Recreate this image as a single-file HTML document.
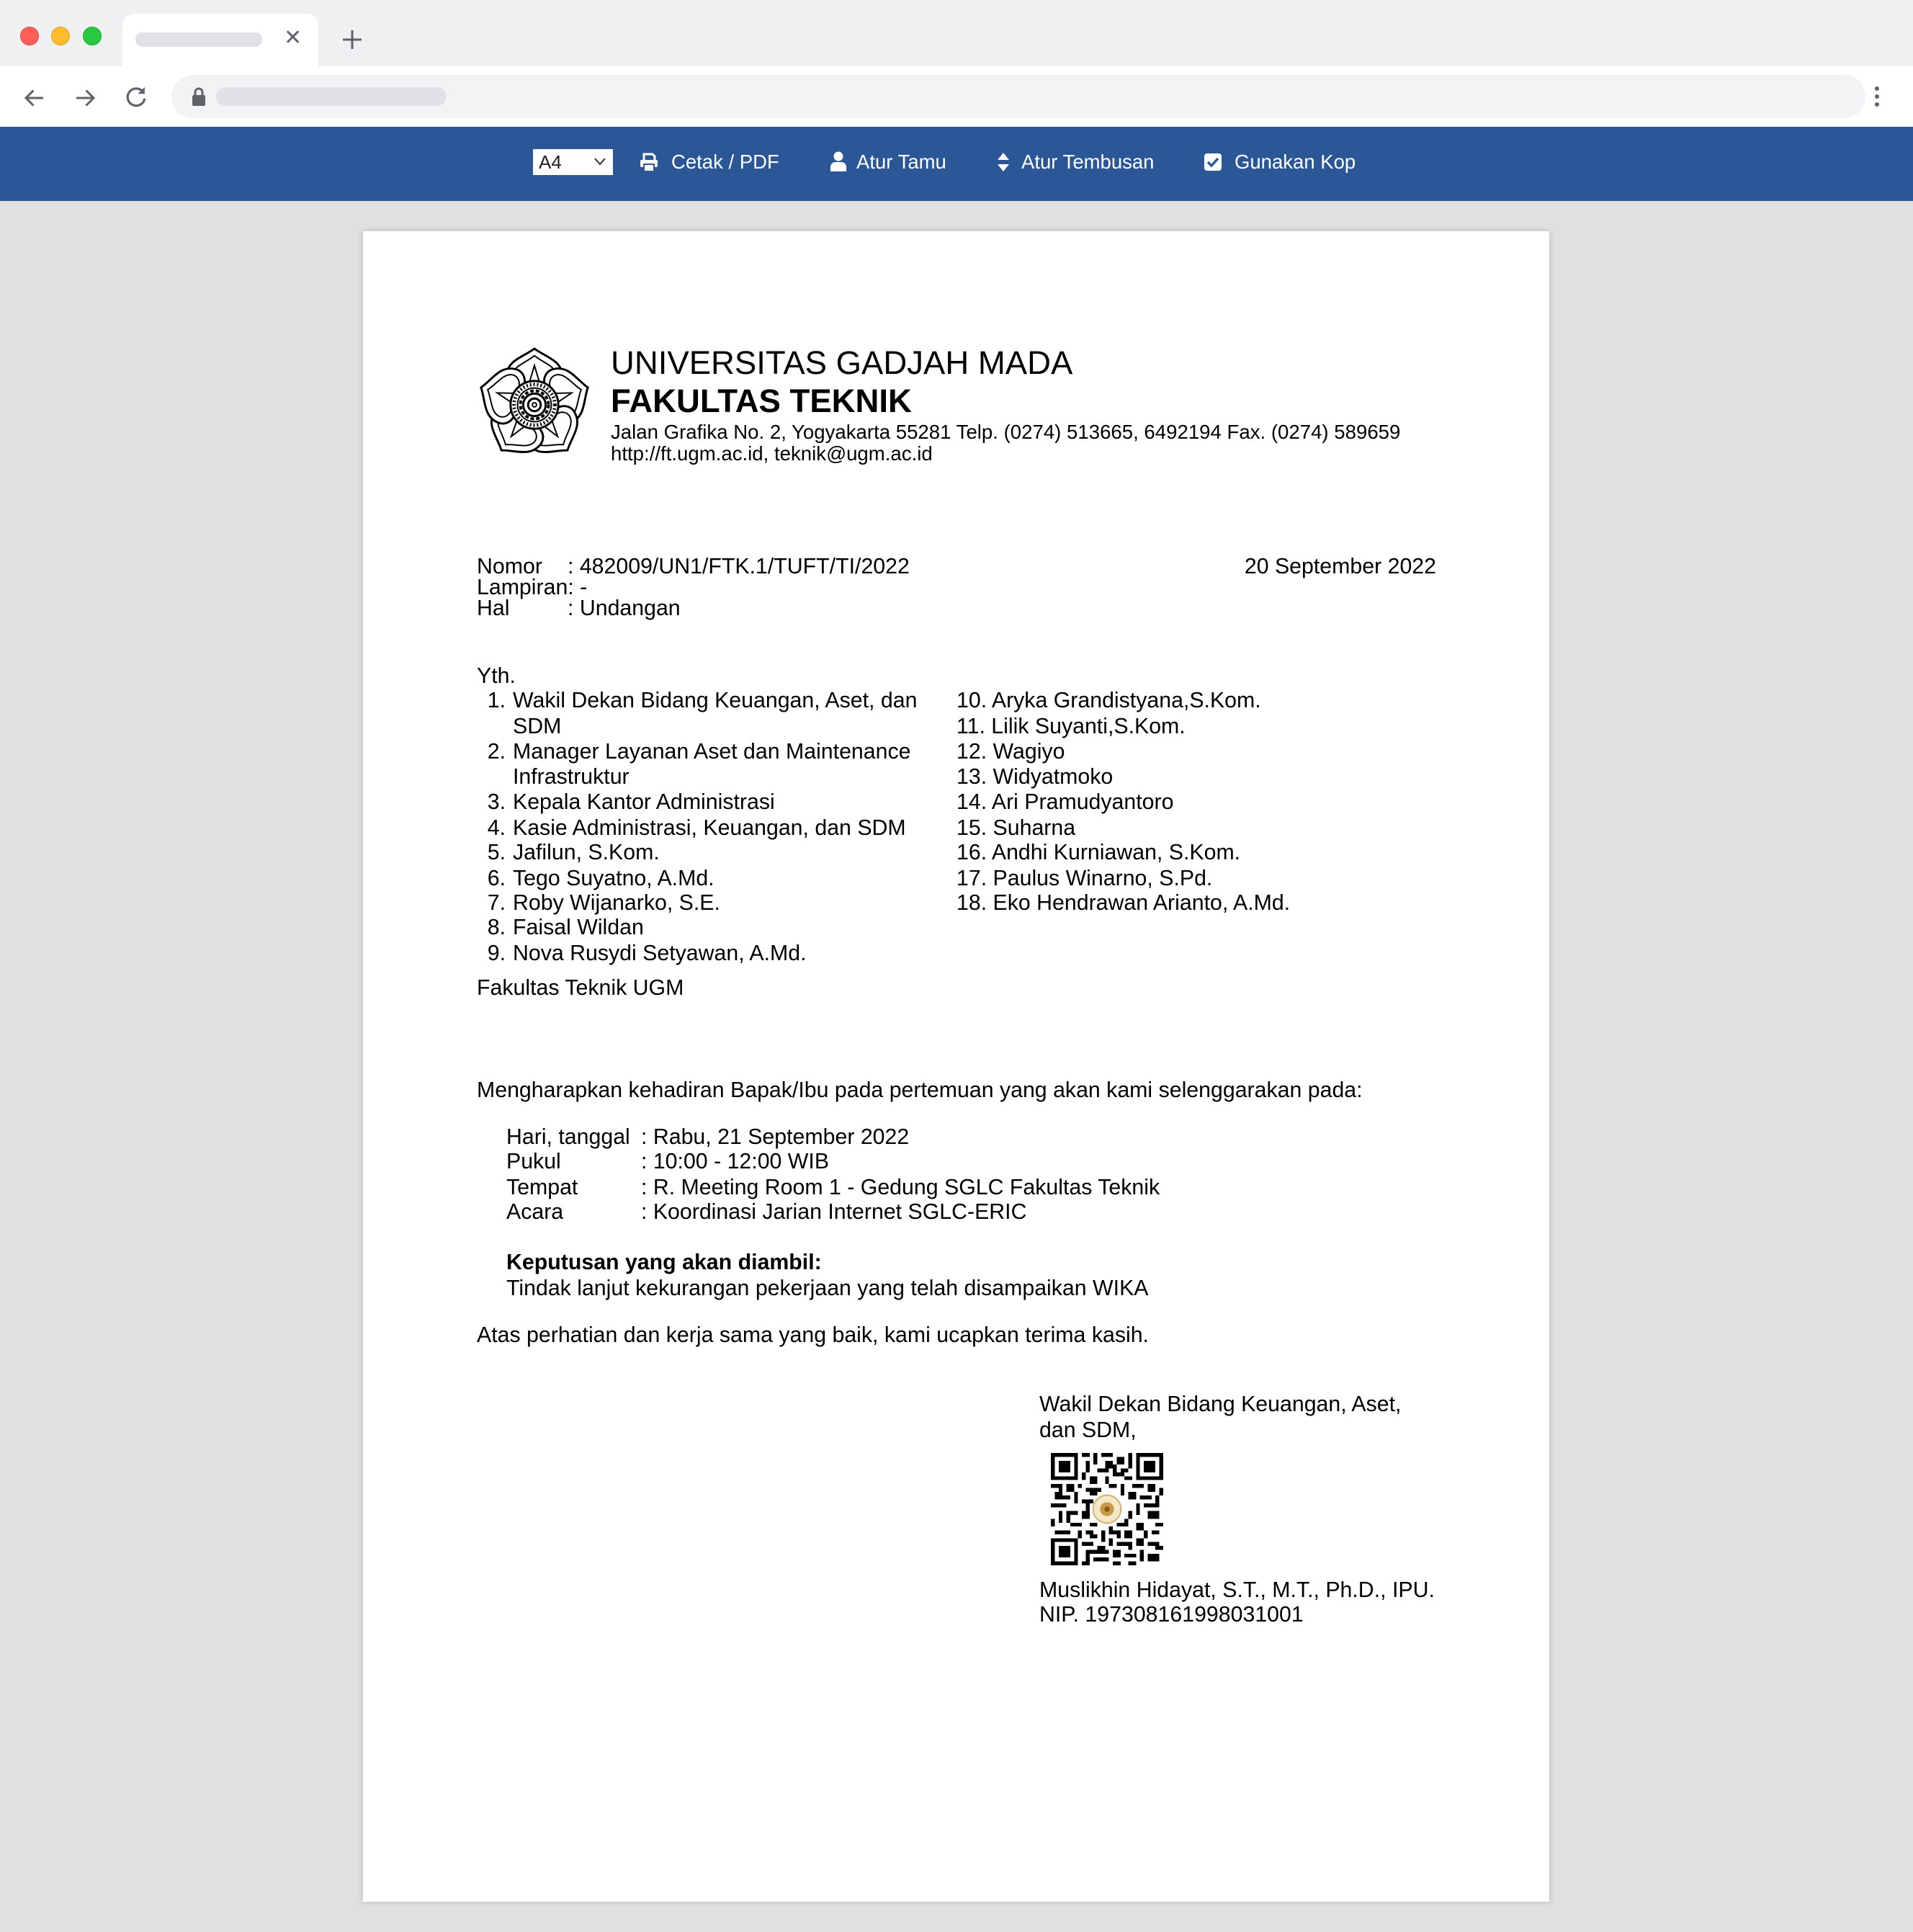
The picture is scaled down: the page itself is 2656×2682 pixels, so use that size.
<!DOCTYPE html>
<html><head><meta charset="utf-8"><style>
*{margin:0;padding:0;box-sizing:border-box}
body{width:2656px;height:2682px;background:#e0e0e0;position:relative;overflow:hidden;font-family:"Liberation Sans",Arial,sans-serif;color:#000}
.a{position:absolute;white-space:nowrap}
.t{font-size:30.3px;line-height:34px;margin-top:2px}
.tb{color:#fff;font-size:27.5px;line-height:34px}
</style></head><body>
<div class="a" style="left:0;top:0;width:2656px;height:92px;background:#eff0f2"></div>
<div class="a" style="left:28px;top:37px;width:26px;height:26px;border-radius:50%;background:#fe5f57;border:1px solid #e0443e"></div>
<div class="a" style="left:71px;top:37px;width:26px;height:26px;border-radius:50%;background:#febc2e;border:1px solid #dea123"></div>
<div class="a" style="left:115px;top:37px;width:26px;height:26px;border-radius:50%;background:#28c840;border:1px solid #1aab29"></div>
<div class="a" style="left:170px;top:19px;width:272px;height:74px;background:#fff;border-radius:16px 16px 0 0"></div>
<div class="a" style="left:188px;top:45px;width:176px;height:20px;border-radius:10px;background:#dfe1e5"></div>
<div class="a" style="left:394px;top:36px;font-size:30px;line-height:34px;color:#5f6368">✕</div>
<svg class="a" style="left:474px;top:40px" width="30" height="30"><path d="M15 2V28M2 15H28" stroke="#5f6368" stroke-width="3"/></svg>
<div class="a" style="left:0;top:92px;width:2656px;height:84px;background:#fff"></div>
<svg class="a" style="left:30px;top:118px" width="36" height="36" viewBox="0 0 24 24"><path d="M20 12H5M11 5l-7 7 7 7" stroke="#5f6368" stroke-width="2" fill="none"/></svg>
<svg class="a" style="left:100px;top:118px" width="36" height="36" viewBox="0 0 24 24"><path d="M4 12h15M13 5l7 7-7 7" stroke="#5f6368" stroke-width="2" fill="none"/></svg>
<svg class="a" style="left:170px;top:116px" width="38" height="38" viewBox="0 0 24 24"><path d="M18.5 8A7.5 7.5 0 1 0 19.5 13" stroke="#5f6368" stroke-width="2" fill="none"/><path d="M19.5 3v6h-6z" fill="#5f6368"/></svg>
<div class="a" style="left:238px;top:104px;width:2352px;height:60px;border-radius:30px;background:#f1f3f4"></div>
<svg class="a" style="left:266px;top:120px" width="20" height="28" viewBox="0 0 20 28"><path d="M5 12V8a5 5 0 0 1 10 0v4" stroke="#5f6368" stroke-width="3" fill="none"/><rect x="1" y="12" width="18" height="15" rx="2" fill="#5f6368"/></svg>
<div class="a" style="left:300px;top:121px;width:320px;height:26px;border-radius:13px;background:#e0e2e5"></div>
<div class="a" style="left:2603px;top:120px;width:6px;height:6px;border-radius:50%;background:#5f6368;box-shadow:0 11px 0 #5f6368,0 22px 0 #5f6368"></div>
<div class="a" style="left:0;top:176px;width:2656px;height:103px;background:#2b5797"></div>
<div class="a" style="left:740px;top:207px;width:111px;height:36px;background:#fff;font-size:26px;line-height:36px;padding-left:8px;color:#222">A4</div>
<svg class="a" style="left:824px;top:217px" width="18" height="14" viewBox="0 0 18 14"><path d="M2 3l7 8 7-8" stroke="#333" stroke-width="2" fill="none"/></svg>
<svg class="a" style="left:887px;top:211px" width="28" height="28" viewBox="0 0 28 28"><path d="M7 11V3h12l3 3v5" stroke="#fff" stroke-width="3" fill="none"/><rect x="2" y="11" width="24" height="10" rx="2" fill="#fff"/><rect x="7" y="17" width="14" height="10" fill="#fff" stroke="#2b5797" stroke-width="2"/></svg>
<div class="a tb" style="left:932px;top:208px">Cetak / PDF</div>
<svg class="a" style="left:1152px;top:210px" width="24" height="28" viewBox="0 0 24 28"><circle cx="12" cy="7" r="6.5" fill="#fff"/><path d="M1 28v-6a7 7 0 0 1 7-7h8a7 7 0 0 1 7 7v6z" fill="#fff"/></svg>
<div class="a tb" style="left:1189px;top:208px">Atur Tamu</div>
<svg class="a" style="left:1384px;top:211px" width="18" height="28" viewBox="0 0 18 28"><path d="M9 1l8 10H1zM9 27l8-10H1z" fill="#fff"/></svg>
<div class="a tb" style="left:1418px;top:208px">Atur Tembusan</div>
<svg class="a" style="left:1671px;top:212px" width="26" height="26" viewBox="0 0 26 26"><rect x="1" y="1" width="24" height="24" rx="4" fill="#fff"/><path d="M6 13l5 5 9-10" stroke="#2b5797" stroke-width="3.5" fill="none"/></svg>
<div class="a tb" style="left:1714px;top:208px">Gunakan Kop</div>
<div class="a" style="left:504px;top:321px;width:1647px;height:2319px;background:#fff;box-shadow:0 0 8px rgba(0,0,0,.18)"></div>
<svg class="a" style="left:664px;top:482px" width="156" height="160" viewBox="-80 -82 160 164">
<g fill="#fff" stroke="#000" stroke-width="3">
<g id="p"><path d="M0-80C-16-68-38-64-40-42-42-26-22-14 0-30 22-14 42-26 40-42 38-64 16-68 0-80z"/><path d="M0-70C-12-60-29-56-31-43-32-31-17-23 0-35 17-23 32-31 31-43 29-56 12-60 0-70z" stroke-width="2"/></g>
<use href="#p" transform="rotate(72)"/><use href="#p" transform="rotate(144)"/><use href="#p" transform="rotate(216)"/><use href="#p" transform="rotate(288)"/>
<path d="M0-56L12-16 53-17 19 6 33 45 0 20-33 45-19 6-53-17-12-16z" stroke-width="2"/>
<circle r="34" stroke-width="3"/><circle r="24" stroke-width="2"/><circle r="16" stroke-width="3"/><circle r="9" stroke-width="3"/><circle r="3" stroke-width="2"/>
</g>
<circle r="29" fill="none" stroke="#000" stroke-width="5" stroke-dasharray="2 3"/>
<circle r="20" fill="none" stroke="#000" stroke-width="4" stroke-dasharray="5 3"/>
</svg>
<div class="a" style="left:848px;top:479px;font-size:45.5px;line-height:50px">UNIVERSITAS GADJAH MADA</div>
<div class="a" style="left:848px;top:532px;font-size:45.5px;line-height:50px;font-weight:bold">FAKULTAS TEKNIK</div>
<div class="a" style="left:848px;top:585px;font-size:27.6px;line-height:30px">Jalan Grafika No. 2, Yogyakarta 55281 Telp. (0274) 513665, 6492194 Fax. (0274) 589659</div>
<div class="a" style="left:848px;top:615px;font-size:27.6px;line-height:30px">http://ft.ugm.ac.id, teknik@ugm.ac.id</div>
<div class="a t" style="left:662px;top:768px">Nomor</div><div class="a t" style="left:788px;top:768px">: 482009/UN1/FTK.1/TUFT/TI/2022</div>
<div class="a t" style="left:1500px;top:768px;width:494px;text-align:right">20 September 2022</div>
<div class="a t" style="left:662px;top:797px">Lampiran: -</div>
<div class="a t" style="left:662px;top:826px">Hal</div><div class="a t" style="left:788px;top:826px">: Undangan</div>
<div class="a t" style="left:662px;top:920px">Yth.</div>
<div class="a t" style="left:640px;top:954px;width:62px;text-align:right">1.</div><div class="a t" style="left:712px;top:954px">Wakil Dekan Bidang Keuangan, Aset, dan</div>
<div class="a t" style="left:712px;top:990px">SDM</div>
<div class="a t" style="left:640px;top:1025px;width:62px;text-align:right">2.</div><div class="a t" style="left:712px;top:1025px">Manager Layanan Aset dan Maintenance</div>
<div class="a t" style="left:712px;top:1060px">Infrastruktur</div>
<div class="a t" style="left:640px;top:1095px;width:62px;text-align:right">3.</div><div class="a t" style="left:712px;top:1095px">Kepala Kantor Administrasi</div>
<div class="a t" style="left:640px;top:1131px;width:62px;text-align:right">4.</div><div class="a t" style="left:712px;top:1131px">Kasie Administrasi, Keuangan, dan SDM</div>
<div class="a t" style="left:640px;top:1165px;width:62px;text-align:right">5.</div><div class="a t" style="left:712px;top:1165px">Jafilun, S.Kom.</div>
<div class="a t" style="left:640px;top:1201px;width:62px;text-align:right">6.</div><div class="a t" style="left:712px;top:1201px">Tego Suyatno, A.Md.</div>
<div class="a t" style="left:640px;top:1235px;width:62px;text-align:right">7.</div><div class="a t" style="left:712px;top:1235px">Roby Wijanarko, S.E.</div>
<div class="a t" style="left:640px;top:1269px;width:62px;text-align:right">8.</div><div class="a t" style="left:712px;top:1269px">Faisal Wildan</div>
<div class="a t" style="left:640px;top:1305px;width:62px;text-align:right">9.</div><div class="a t" style="left:712px;top:1305px">Nova Rusydi Setyawan, A.Md.</div>
<div class="a t" style="left:1328px;top:954px">10. Aryka Grandistyana,S.Kom.</div>
<div class="a t" style="left:1328px;top:990px">11. Lilik Suyanti,S.Kom.</div>
<div class="a t" style="left:1328px;top:1025px">12. Wagiyo</div>
<div class="a t" style="left:1328px;top:1060px">13. Widyatmoko</div>
<div class="a t" style="left:1328px;top:1095px">14. Ari Pramudyantoro</div>
<div class="a t" style="left:1328px;top:1131px">15. Suharna</div>
<div class="a t" style="left:1328px;top:1165px">16. Andhi Kurniawan, S.Kom.</div>
<div class="a t" style="left:1328px;top:1201px">17. Paulus Winarno, S.Pd.</div>
<div class="a t" style="left:1328px;top:1235px">18. Eko Hendrawan Arianto, A.Md.</div>
<div class="a t" style="left:662px;top:1353px">Fakultas Teknik UGM</div>
<div class="a t" style="left:662px;top:1495px">Mengharapkan kehadiran Bapak/Ibu pada pertemuan yang akan kami selenggarakan pada:</div>
<div class="a t" style="left:703px;top:1560px">Hari, tanggal</div><div class="a t" style="left:890px;top:1560px">: Rabu, 21 September 2022</div>
<div class="a t" style="left:703px;top:1594px">Pukul</div><div class="a t" style="left:890px;top:1594px">: 10:00 - 12:00 WIB</div>
<div class="a t" style="left:703px;top:1630px">Tempat</div><div class="a t" style="left:890px;top:1630px">: R. Meeting Room 1 - Gedung SGLC Fakultas Teknik</div>
<div class="a t" style="left:703px;top:1664px">Acara</div><div class="a t" style="left:890px;top:1664px">: Koordinasi Jarian Internet SGLC-ERIC</div>
<div class="a t" style="left:703px;top:1734px;font-weight:bold">Keputusan yang akan diambil:</div>
<div class="a t" style="left:703px;top:1770px">Tindak lanjut kekurangan pekerjaan yang telah disampaikan WIKA</div>
<div class="a t" style="left:662px;top:1835px">Atas perhatian dan kerja sama yang baik, kami ucapkan terima kasih.</div>
<div class="a t" style="left:1443px;top:1931px">Wakil Dekan Bidang Keuangan, Aset,</div>
<div class="a t" style="left:1443px;top:1967px">dan SDM,</div>
<svg class="a" style="left:1459px;top:2017px" width="156" height="156" viewBox="0 0 29 29" shape-rendering="crispEdges">
<g fill="#000"><path d="M0 0h7v7h-7zM22 0h7v7h-7zM0 22h7v7h-7z"/></g>
<g fill="#fff"><path d="M1 1h5v5h-5zM23 1h5v5h-5zM1 23h5v5h-5z"/></g>
<g fill="#000"><path d="M2 2h3v3h-3zM24 2h3v3h-3zM2 24h3v3h-3z"/>
<path d="M8 0h2v1h-2zM11 0h1v3h-1zM13 0h3v1h-3zM17 1h2v2h-2zM20 0h1v4h-1zM9 2h1v3h-1zM14 2h2v2h-2zM12 4h3v1h-3zM8 5h1v2h-1zM16 5h3v1h-3zM10 6h2v2h-2zM14 6h1v2h-1zM19 6h2v1h-2zM16 3h1v2h-1zM18 4h2v1h-2z
M0 8h3v1h-3zM4 8h2v2h-2zM7 8h1v1h-1zM9 9h4v1h-4zM15 8h2v1h-2zM18 8h1v3h-1zM21 8h3v1h-3zM25 8h2v2h-2zM28 9h1v2h-1zM10 10h2v1h-2zM2 9h1v1h-1z
M1 10h2v2h-2zM6 10h1v3h-1zM13 11h2v1h-2zM20 10h2v2h-2zM23 11h3v1h-3zM0 13h4v1h-4zM8 12h3v1h-3zM22 13h1v3h-1zM24 13h4v1h-4zM3 11h2v1h-2zM9 13h1v2h-1zM27 11h1v2h-1z
M2 15h1v3h-1zM4 15h3v1h-3zM8 15h2v2h-2zM20 15h1v2h-1zM25 15h2v2h-2zM0 17h1v2h-1zM5 18h3v1h-3zM10 18h2v1h-2zM17 18h3v1h-3zM22 18h2v2h-2zM27 18h2v1h-2zM4 16h1v2h-1zM19 17h1v1h-1zM27 15h1v2h-1zM15 19h1v1h-1z
M1 20h4v1h-4zM7 20h1v2h-1zM9 20h2v1h-2zM13 20h1v3h-1zM15 20h3v1h-3zM19 20h2v2h-2zM24 20h1v2h-1zM26 20h2v1h-2zM10 21h2v1h-2zM17 21h1v1h-1z
M8 23h3v1h-3zM12 24h2v2h-2zM15 22h1v2h-1zM17 23h4v1h-4zM22 22h2v2h-2zM25 23h3v1h-3zM9 25h1v3h-1zM11 27h4v1h-4zM16 25h2v2h-2zM19 26h3v1h-3zM23 25h1v3h-1zM25 26h3v2h-3zM20 28h2v1h-2zM8 28h2v1h-2zM16 28h2v1h-2zM14 25h1v1h-1zM10 25h2v1h-2zM20 24h1v1h-1zM27 24h2v1h-2z"/></g>
<circle cx="14.5" cy="14.5" r="3.6" fill="#f3e7c6" stroke="#d6b57a" stroke-width=".4"/>
<circle cx="14.5" cy="14.5" r="1.8" fill="#c79a4a"/>
<circle cx="14.5" cy="14.5" r=".7" fill="#8a5a1c"/>
</svg>
<div class="a t" style="left:1443px;top:2189px">Muslikhin Hidayat, S.T., M.T., Ph.D., IPU.</div>
<div class="a t" style="left:1443px;top:2223px">NIP. 197308161998031001</div>
</body></html>
